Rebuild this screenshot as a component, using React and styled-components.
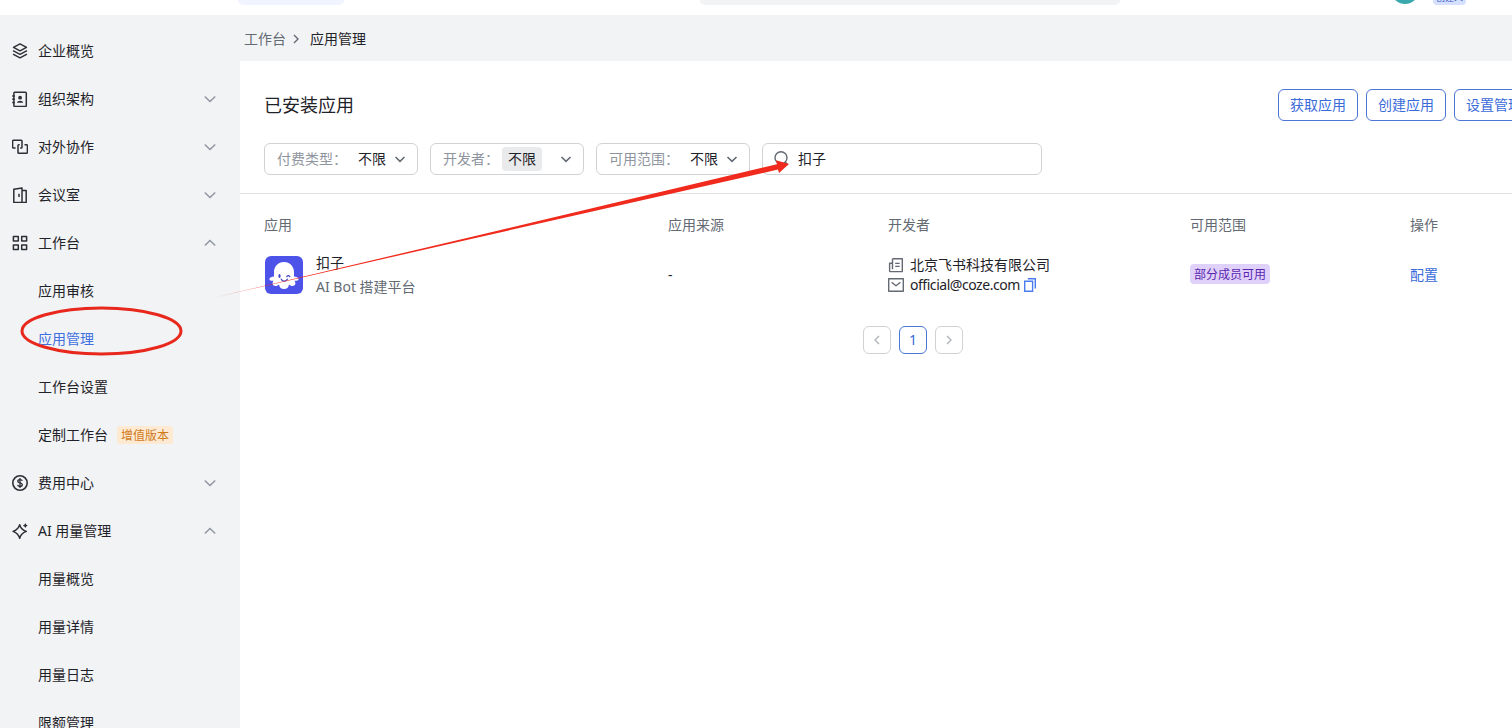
import React from 'react';
import styled, { createGlobalStyle, css } from 'styled-components';

const Global = createGlobalStyle`
  * { box-sizing: border-box; }
  html, body { margin: 0; height: 100%; overflow: hidden; }
  body {
    font-family: "Noto Sans", "Noto Sans CJK SC", sans-serif;
    font-size: 14px;
    line-height: 22px;
    color: #1f2329;
    background: #fff;
  }
  svg { display: block; flex: none; }
`;

const Page = styled.div`
  position: relative;
  width: 1512px;
  height: 728px;
  overflow: hidden;
  display: flex;
  flex-direction: column;
`;
const TopBar = styled.header`
  height: 15px;
  flex: none;
  display: flex;
  align-items: flex-start;
  padding-left: 238px;
  background: #fff;
`;
const TopTab = styled.div`
  width: 106px;
  height: 5px;
  border-radius: 0 0 6px 6px;
  background: #f0f4ff;
`;
const TopSearch = styled.div`
  width: 420px;
  height: 5px;
  margin-left: 356px;
  border-radius: 0 0 6px 6px;
  background: #f2f3f5;
`;
const AvatarClip = styled.div`
  width: 28px;
  height: 4px;
  margin-left: 271px;
  display: flex;
  align-items: flex-end;
  overflow: hidden;
`;
const Avatar = styled.div`
  width: 28px;
  height: 28px;
  flex: none;
  border-radius: 50%;
  background: #3aa9ae;
`;
const VersionClip = styled.div`
  width: 33px;
  height: 5px;
  margin-left: 14px;
  display: flex;
  align-items: flex-end;
  justify-content: center;
  overflow: hidden;
  border-radius: 0 0 4px 4px;
  background: #d6e0ff;
  color: #3456c0;
  font-size: 9px;
  line-height: 15px;
  white-space: nowrap;
`;
const Body = styled.div`
  flex: 1;
  min-height: 0;
  display: flex;
  background: #f1f3f5;
`;
const Sidebar = styled.nav`
  width: 240px;
  flex: none;
  padding-top: 12px;
  overflow: hidden;
`;
const Item = styled.div`
  height: 48px;
  display: flex;
  align-items: center;
  padding: 0 22px 0 ${(p) => (p.$child ? 38 : 12)}px;
  color: ${(p) => (p.$active ? '#3f6fe0' : '#1f2329')};
`;
const ItemIcon = styled.span`
  width: 16px;
  margin-right: 10px;
  color: #2b2f36;
`;
const ItemLabel = styled.span`
  white-space: nowrap;
`;
const ItemArrow = styled.span`
  margin-left: auto;
  margin-right: 2px;
  color: #8f959e;
`;
const Badge = styled.span`
  height: 18px;
  margin-left: 9px;
  padding: 1px 4px 0;
  border-radius: 3px;
  background: #feead2;
  color: #d07a1a;
  font-size: 12px;
  line-height: 18px;
`;
const Main = styled.main`
  flex: 1;
  min-width: 0;
  display: flex;
  flex-direction: column;
`;
const Crumbs = styled.div`
  height: 46px;
  flex: none;
  display: flex;
  align-items: center;
  padding: 2px 0 0 4px;
  color: #646a73;
  svg { margin: 0 8px 0 4px; }
  strong { font-weight: 400; color: #1f2329; }
`;
const Panel = styled.section`
  flex: 1;
  background: #fff;
  overflow: hidden;
`;
const PanelHead = styled.div`
  height: 60px;
  display: flex;
  align-items: flex-end;
  padding-left: 24px;
`;
const Title = styled.h1`
  width: 1014px;
  flex: none;
  margin: 0;
  font-size: 18px;
  font-weight: 400;
  line-height: 32px;
`;
const Actions = styled.div`
  display: flex;
  gap: 8px;
`;
const OutlineButton = styled.button`
  height: 32px;
  flex: none;
  padding: 0 11px;
  border: 1px solid #4a76d4;
  border-radius: 6px;
  background: #fff;
  color: #3a6bd8;
  font: inherit;
  white-space: nowrap;
`;
const Filters = styled.div`
  height: 73px;
  display: flex;
  gap: 12px;
  padding: 22px 0 0 24px;
  border-bottom: 1px solid #dee0e3;
`;
const field = css`
  height: 32px;
  display: flex;
  align-items: center;
  border: 1px solid #d0d3d6;
  border-radius: 6px;
  background: #fff;
`;
const Select = styled.div`
  ${field}
  width: 154px;
  padding: 0 11px 0 12px;
`;
const SelectLabel = styled.span`
  width: ${(p) => p.$width}px;
  flex: none;
  white-space: nowrap;
  overflow: hidden;
  color: #8f959e;
`;
const SelectValue = styled.span`
  height: 24px;
  line-height: 24px;
  padding: 0 6px;
  border-radius: 4px;
  background: ${(p) => (p.$hot ? '#e9eaeb' : 'transparent')};
`;
const SelectArrow = styled.span`
  margin-left: auto;
  color: #646a73;
`;
const SearchBox = styled.div`
  ${field}
  width: 280px;
  padding-left: 10px;
  gap: 9px;
  color: #1f2329;
  svg { color: #646a73; }
`;
const Row = styled.div`
  display: grid;
  grid-template-columns: 404px 220px 302px 220px 1fr;
  align-items: center;
  height: ${(p) => p.$height}px;
  padding: ${(p) => (p.$head ? 6 : 0)}px 0 0 24px;
  color: ${(p) => (p.$head ? '#646a73' : '#1f2329')};
`;
const AppCell = styled.div`
  display: flex;
  align-items: center;
  gap: 12px;
`;
const AppText = styled.div`
  display: flex;
  flex-direction: column;
  line-height: 24px;
  color: #646a73;
  strong { font-weight: 400; color: #1f2329; }
`;
const DevCell = styled.div`
  display: flex;
  flex-direction: column;
`;
const DevLine = styled.div`
  height: 20px;
  display: flex;
  align-items: center;
  line-height: 20px;
  svg { color: #646a73; }
`;
const DevText = styled.span`
  margin: 0 4px 0 6px;
  letter-spacing: ${(p) => p.$spacing || 0}px;
  white-space: nowrap;
`;
const Tag = styled.span`
  justify-self: start;
  height: 20px;
  margin-bottom: 2px;
  padding: 0 4px;
  border-radius: 4px;
  background: #e0d1fb;
  color: #5a26ae;
  font-size: 12px;
  line-height: 21px;
  white-space: nowrap;
`;
const Link = styled.a`
  color: #3a6bd8;
`;
const Pager = styled.div`
  display: flex;
  gap: 8px;
  padding: 26px 0 0 623px;
`;
const PageButton = styled.button`
  width: 28px;
  height: 28px;
  display: flex;
  align-items: center;
  justify-content: center;
  padding: 0;
  border: 1px solid ${(p) => (p.$current ? '#4a76d4' : '#d0d3d6')};
  border-radius: 6px;
  background: #fff;
  color: ${(p) => (p.$current ? '#3a6bd8' : '#b0b4ba')};
  font: inherit;
`;
const Markup = styled.svg`
  position: absolute;
  inset: 0;
  pointer-events: none;
`;

const Chevron = ({ dir = 'down', size = 12, w = 1.4 }) => {
  const d = {
    down: 'M.8 3.500 6 8.500 11.200 3.500',
    up: 'M.8 8.500 6 3.500 11.200 8.500',
    downSmall: 'M1.500 4 6 8.300 10.500 4',
    left: 'M8 2 4 6 8 10',
    right: 'M4 2 8 6 4 10',
  }[dir];
  return (
    <svg width={size} height={size} viewBox="0 0 12 12" fill="none" stroke="currentColor" strokeWidth={w}>
      <path d={d} />
    </svg>
  );
};

const Svg16 = ({ children, w = 1.5 }) => (
  <svg width="16" height="16" viewBox="0 0 16 16" fill="none" stroke="currentColor" strokeWidth={w} strokeLinejoin="round">
    {children}
  </svg>
);

const icons = {
  layers: (
    <Svg16 w={1.4}>
      <path d="M8 .9 14.500 4.300 8 7.800 1.500 4.300Z" />
      <path d="M1 7.600 8 11.400l7-3.800M1 11.100 8 14.900l7-3.800" />
    </Svg16>
  ),
  contacts: (
    <Svg16>
      <rect x="1.900" y="1.200" width="12.400" height="14.200" rx=".8" />
      <path d="M.2 5h2.600M.2 8.300h2.600M.2 11.600h2.600" />
      <circle cx="8.100" cy="6.700" r="1.900" fill="currentColor" stroke="none" />
      <path d="M5 11.700c0-2.700 6.200-2.700 6.200 0Z" fill="currentColor" stroke="none" />
    </Svg16>
  ),
  link: (
    <Svg16>
      <path d="M3.600 9H1.400a.8.800 0 0 1-.8-.8V2.100a.8.800 0 0 1 .8-.8h7.800a.8.800 0 0 1 .8.800v6.200a.8.800 0 0 1-.8.800H8.200" />
      <path d="M12.500 5.700h2.100a.8.800 0 0 1 .8.800v6.900a.8.800 0 0 1-.8.800H6.800a.8.800 0 0 1-.8-.8V6.500a.8.800 0 0 1 .8-.8h.9" />
    </Svg16>
  ),
  door: (
    <Svg16>
      <path d="M1.800 2.300 10 .9v14.600H1.800ZM10 3.500h4.200v12H10M7 6.700v3.300" />
    </Svg16>
  ),
  grid: (
    <Svg16>
      <path d="M1.400 1.500h4.900v4.600H1.400ZM9.700 1.500h4.900v4.600H9.700ZM1.400 9.900h4.900v4.600H1.400ZM9.700 9.900h4.900v4.600H9.700Z" />
    </Svg16>
  ),
  coin: (
    <Svg16>
      <circle cx="8" cy="8" r="7.200" strokeWidth="1.600" />
      <path d="M10.300 5.900C10 4.900 9.100 4.600 8 4.600c-1.300 0-2.200.5-2.200 1.600C5.800 8.600 10.300 7.300 10.300 9.800c0 1.100-1 1.700-2.300 1.700S5.800 10.900 5.600 9.900M8 3v10" strokeWidth="1.300" />
    </Svg16>
  ),
  spark: (
    <Svg16>
      <path d="M7.700 1.700C8.500 5 10 7 14.300 8.400 10.300 9.800 8.700 11.600 7.700 15.200 6.600 11.600 5 9.800 1 8.400 5 7 6.700 5 7.700 1.700Z" />
      <path d="M13.300.1q.5 2 2.500 2.500-2 .5-2.500 2.500-.5-2-2.500-2.500 2-.5 2.500-2.500Z" fill="currentColor" stroke="none" />
    </Svg16>
  ),
  company: (
    <Svg16 w={1.4}>
      <path d="M4.500 1.700h9.800v12.900H2.200a.6.600 0 0 1-.6-.6V6.200h2.200M4.500 1.700v10.500M7.200 6.400h4.500M7.200 9.400h4.500" />
    </Svg16>
  ),
  mail: (
    <Svg16 w={1.4}>
      <path d="M.7 1.700h14.600v12.600H.7ZM3.600 5.300 8 8.800l4.400-3.500" />
    </Svg16>
  ),
};

const CopyIcon = () => (
  <svg width="12" height="14" viewBox="0 0 12 14" fill="none" stroke="#4a7cf0" strokeWidth="1.400">
    <path d="M.7 3.200h7.900v10.100H.7ZM3.800.7h7.500v9.800" />
  </svg>
);

const SearchIcon = () => (
  <svg width="16" height="16" viewBox="0 0 16 16" fill="none" stroke="currentColor" strokeWidth="1.400">
    <circle cx="8" cy="6.800" r="6" />
    <path d="m12.200 11 2.500 2.800" />
  </svg>
);

const BotLogo = () => (
  <svg width="40" height="40" viewBox="0 0 40 40">
    <rect x="1" y="1" width="38" height="38" rx="6" fill="#4d53e8" />
    <path
      d="M20 7c-6 0-10 4.400-10 10.200v4.300c-2 .2-4.500.9-4.600 2.400 0 1.600 2.100 1.900 4.100 1.800-1.800 2.600-.9 5.200 2 5.200 1.500 0 2.700-.6 3.500-1.500.4 2.900 2.200 4.700 5 4.700s4.600-1.800 5-4.700c.8.900 2 1.500 3.500 1.500 2.900 0 3.800-2.600 2-5.200 2 .1 4.100-.2 4.100-1.800-.1-1.500-2.600-2.200-4.600-2.400v-4.300C30 11.400 26 7 20 7Z"
      fill="#fff"
    />
    <ellipse cx="15.500" cy="21" rx="1.100" ry="2" fill="#4146c4" />
    <path d="M22.800 21.600q1.500-1.800 3 0M17.300 24.200c1.200 2.500 4.800 2.500 6 0" fill="none" stroke="#4146c4" strokeWidth="1.300" strokeLinecap="round" />
  </svg>
);

const menu = [
  { label: '企业概览', icon: 'layers' },
  { label: '组织架构', icon: 'contacts', arrow: 'down' },
  { label: '对外协作', icon: 'link', arrow: 'down' },
  { label: '会议室', icon: 'door', arrow: 'down' },
  { label: '工作台', icon: 'grid', arrow: 'up' },
  { label: '应用审核' },
  { label: '应用管理', active: true },
  { label: '工作台设置' },
  { label: '定制工作台', badge: '增值版本' },
  { label: '费用中心', icon: 'coin', arrow: 'down' },
  { label: 'AI 用量管理', icon: 'spark', arrow: 'up' },
  { label: '用量概览' },
  { label: '用量详情' },
  { label: '用量日志' },
  { label: '限额管理' },
];

const filters = [
  { label: '付费类型：', width: 75 },
  { label: '开发者：', width: 59, hot: true },
  { label: '可用范围：', width: 75 },
];

export default function App() {
  return (
    <Page>
      <Global />
      <TopBar>
        <TopTab />
        <TopSearch />
        <AvatarClip><Avatar /></AvatarClip>
        <VersionClip>创建人</VersionClip>
      </TopBar>
      <Body>
        <Sidebar>
          {menu.map((m) => (
            <Item key={m.label} $child={!m.icon} $active={m.active}>
              {m.icon && <ItemIcon>{icons[m.icon]}</ItemIcon>}
              <ItemLabel>{m.label}</ItemLabel>
              {m.badge && <Badge>{m.badge}</Badge>}
              {m.arrow && <ItemArrow><Chevron dir={m.arrow} /></ItemArrow>}
            </Item>
          ))}
        </Sidebar>
        <Main>
          <Crumbs>
            工作台
            <Chevron dir="right" />
            <strong>应用管理</strong>
          </Crumbs>
          <Panel>
            <PanelHead>
              <Title>已安装应用</Title>
              <Actions>
                <OutlineButton>获取应用</OutlineButton>
                <OutlineButton>创建应用</OutlineButton>
                <OutlineButton>设置管理员</OutlineButton>
              </Actions>
            </PanelHead>
            <Filters>
              {filters.map((f) => (
                <Select key={f.label}>
                  <SelectLabel $width={f.width}>{f.label}</SelectLabel>
                  <SelectValue $hot={f.hot}>不限</SelectValue>
                  <SelectArrow><Chevron dir="downSmall" w={1.6} /></SelectArrow>
                </Select>
              ))}
              <SearchBox>
                <SearchIcon />
                扣子
              </SearchBox>
            </Filters>
            <Row $head $height={56}>
              <span>应用</span>
              <span>应用来源</span>
              <span>开发者</span>
              <span>可用范围</span>
              <span>操作</span>
            </Row>
            <Row $height={50}>
              <AppCell>
                <BotLogo />
                <AppText>
                  <strong>扣子</strong>
                  <span>AI Bot 搭建平台</span>
                </AppText>
              </AppCell>
              <span>-</span>
              <DevCell>
                <DevLine>{icons.company}<DevText>北京飞书科技有限公司</DevText></DevLine>
                <DevLine>{icons.mail}<DevText $spacing={-0.46}>official@coze.com</DevText><CopyIcon /></DevLine>
              </DevCell>
              <Tag>部分成员可用</Tag>
              <Link>配置</Link>
            </Row>
            <Pager>
              <PageButton><Chevron dir="left" /></PageButton>
              <PageButton $current>1</PageButton>
              <PageButton><Chevron dir="right" /></PageButton>
            </Pager>
          </Panel>
        </Main>
      </Body>
      <Markup width="1512" height="728" viewBox="0 0 1512 728">
        <ellipse cx="101.500" cy="331" rx="79.500" ry="23" fill="none" stroke="#e8281c" strokeWidth="3" />
        <path d="M214 297.600 470 237.200 777 164.200 776 160.300 789 164 779 173 778 169.600 470 239.200Z" fill="#f02a1c" />
      </Markup>
    </Page>
  );
}
